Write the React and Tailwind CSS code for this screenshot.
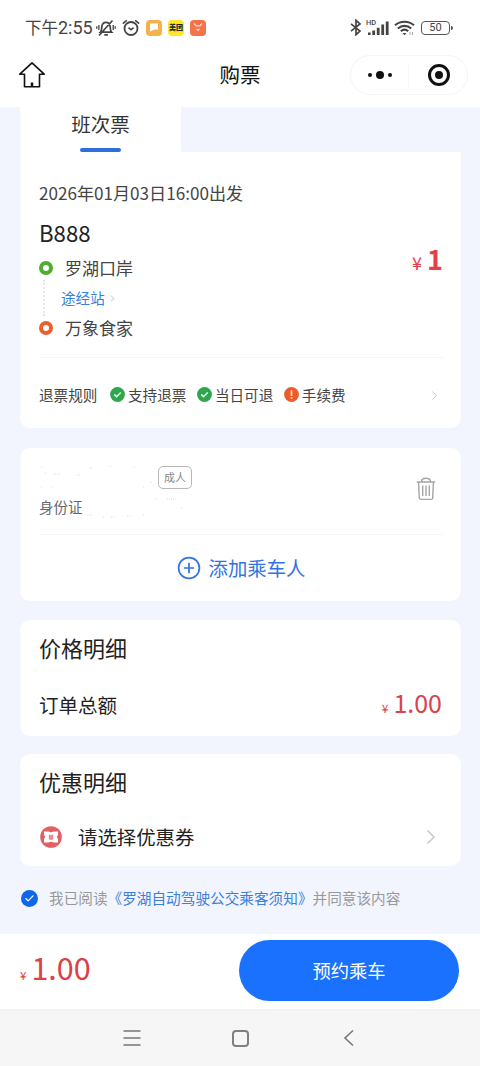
import { Check, ChevronRight } from 'lucide-react'

const Card = ({ className = '', children }) => (
  <div className={`w-[441px] bg-white rounded-[10px] px-[19px] ${className}`}>{children}</div>
)

const Ring = ({ className }) => <span className={`w-[14px] h-[14px] rounded-full border-4 bg-white ${className}`} />

const Badge = ({ ok, children }) => (
  <span className="flex items-center gap-[3px]">
    <svg width="15" height="15" viewBox="0 0 15 15" fill="none">
      <circle cx="7.5" cy="7.5" r="7.4" fill={ok ? '#30a64c' : '#ec5b2b'} />
      {ok
        ? <path d="M4.2 7.4l2.3 2.2 4.3-4.1" stroke="#d8ffe0" strokeWidth="1.5" />
        : <path d="M7.5 3.3v5.6M7.5 10.2v1.5" stroke="#ffd9a8" strokeWidth="1.7" />}
    </svg>
    {children}
  </span>
)

const StatusBar = () => (
  <div className="h-[55px] pl-[25px] pr-[27px] flex items-center justify-between text-[#444]">
    <div className="flex items-center">
      <span className="w-[69px] text-[16.5px] whitespace-nowrap">
        下午<span className="font-[Roboto] text-[18px]">2:55</span>
      </span>
      <svg className="ml-[2px]" width="20" height="18" viewBox="0 0 20 18" fill="none" stroke="#444" strokeWidth="1.7">
        <path d="M4.5 13.2c1.6-1.4.9-4 1.4-6.2C6.4 4.6 8 3.4 10 3.4s3.6 1.2 4.1 3.6c.5 2.2-.2 4.8 1.4 6.2zM8.3 15.8h3.6M3 16.5L16.5 1.5" />
        <path d="M2.9 6v5M.8 7.3v2.4M17.2 6v5M19.2 7.3v2.4" strokeWidth="1.3" />
      </svg>
      <svg className="ml-[6px]" width="18" height="17" viewBox="0 0 18 17" fill="none" stroke="#444" strokeWidth="1.8">
        <circle cx="9" cy="9.5" r="6.5" />
        <path d="M.8 4.6L4.8 1.3M17.2 4.6L13.2 1.3M6.5 8.7L9 10.8l2.6-2.1" strokeWidth="1.6" />
      </svg>
      <span className="ml-[6px] w-[16px] h-[16px] rounded-[4px] bg-[#f6b04c] flex items-center justify-center">
        <svg width="10" height="9" viewBox="0 0 10 9"><path d="M1.5.5H9v6H5.5L1 8.5V1z" fill="#fff" /></svg>
      </span>
      <span className="ml-[6px] w-[16px] h-[16px] rounded-[4px] bg-[#fce72b] text-[#222] text-[7px] leading-none font-black flex items-center justify-center whitespace-nowrap">美团</span>
      <span className="ml-[6px] w-[16px] h-[16px] rounded-[4px] bg-[#f57348] flex items-center justify-center">
        <svg width="12" height="12" viewBox="0 0 12 12" fill="none" stroke="#fff" strokeOpacity=".75" strokeWidth="1.2">
          <path d="M2 1.5l2 2.3h4l2-2.3M4.5 7l1.5 1.5L7.5 7" />
        </svg>
      </span>
    </div>
    <div className="flex items-center">
      <svg width="12" height="17" viewBox="0 0 12 17" fill="none" stroke="#444" strokeWidth="1.7">
        <path d="M1 4.8l9 7.2-4 3.7V1.3L10 5l-9 7.2" />
      </svg>
      <svg className="ml-[4px]" width="24" height="17" viewBox="0 0 24 17" fill="#444">
        <text x="0" y="6.2" fontSize="7.5" fontFamily="Roboto" fontWeight="500">HD</text>
        <path d="M2 13.5h2.6V16H2zM6.3 11.5h2.8V16H6.3zM10.8 8.8h2.8V16h-2.8zM15.3 5.5h2.8V16h-2.8zM19.8 2.5h2.8V16h-2.8z" />
      </svg>
      <svg className="ml-[4px]" width="21" height="16" viewBox="0 0 21 16" fill="none" stroke="#444" strokeWidth="2.1">
        <path d="M1 5.3C6.4.5 14.6.5 20 5.3M3.8 8.5c4-3.500 9.400-3.500 13.400 0M6.800 11.300c2.200-1.900 5.200-1.900 7.400 0" />
        <path d="M8.5 12.900h4l-2 2.300z" fill="#444" stroke="none" />
        <path d="M16 12v3M18.500 12v3" stroke="#aaa" strokeWidth="1" />
      </svg>
      <span className="ml-[6px] w-[29px] h-[14px] rounded-[4px] border border-[#555] text-[11px] leading-none font-[Roboto] flex items-center justify-center">50</span>
      <span className="ml-px w-[2px] h-[4px] rounded-r bg-[#555]" />
    </div>
  </div>
)

const NavBar = () => (
  <div className="h-[52px] pl-[18px] pr-[12px] flex items-start justify-between">
    <svg className="mt-[6px]" width="28" height="28" viewBox="0 0 28 28" fill="none" stroke="#111" strokeWidth="1.6" strokeLinejoin="round">
      <path d="M14 1.8L1.8 13.2h4.7v12.5h15V13.2h4.700z" />
      <path d="M14 21.5v4" strokeWidth="2.5" />
    </svg>
    <h1 className="ml-[84px] h-[40px] leading-[39px] text-[20.5px] text-[#111]">购票</h1>
    <div className="w-[118px] h-[40px] rounded-full border border-[#f5f5f5] flex items-center">
      <div className="w-[58px] flex items-center justify-center gap-[4px] border-r border-[#f7f7f7] h-[24px]">
        <span className="w-[4px] h-[4px] rounded-full bg-[#111]" />
        <span className="w-[8px] h-[8px] rounded-full bg-[#111]" />
        <span className="w-[4px] h-[4px] rounded-full bg-[#111]" />
      </div>
      <div className="flex-1 flex justify-center pl-[2px]">
        <span className="w-[22px] h-[22px] rounded-full border-[3px] border-[#111] flex items-center justify-center">
          <span className="w-[8px] h-[8px] rounded-full bg-[#111]" />
        </span>
      </div>
    </div>
  </div>
)

const TripCard = () => (
  <Card className="h-[276px] rounded-t-none flex flex-col">
    <p className="mt-[28px] h-[26px] leading-[26px] text-[17.1px] text-[#444]">2026年01月03日16:00出发</p>
    <div className="flex justify-between">
      <div>
        <p className="mt-[10px] h-[32px] leading-[32px] text-[22.2px] text-[#222]">B888</p>
        <div className="mt-[8px] h-[24px] flex items-center gap-[12px] text-[17px] text-[#444]">
          <Ring className="border-[#4eac2e]" /><span className="-mt-px">罗湖口岸</span>
        </div>
        <div className="ml-[4px] h-[36px] flex items-center border-l-2 border-dotted border-[#e6e6e6] pl-[16px] text-[14.6px] text-[#3b7fdc]">
          <span>途经站</span><ChevronRight size={11} className="ml-[2px] text-[#bbb]" strokeWidth={2} />
        </div>
        <div className="h-[24px] flex items-center gap-[12px] text-[17px] text-[#444]">
          <Ring className="border-[#e9602f]" /><span className="-mt-px">万象食家</span>
        </div>
      </div>
      <p className="mt-[33px] h-[40px] leading-[40px] flex items-baseline gap-[5px] text-[#e54048] mr-[-1px]">
        <span className="text-[18px]">¥</span>
        <span className="text-[27px] font-bold">1</span>
      </p>
    </div>
    <div className="mt-[17px] w-[404px] border-t border-[#f5f5f5]" />
    <div className="h-[76px] pt-[4px] flex items-center text-[14.6px] text-[#444]">
      <span className="w-[71px]">退票规则</span>
      <div className="flex gap-[10.5px]">
        <Badge ok>支持退票</Badge>
        <Badge ok>当日可退</Badge>
        <Badge>手续费</Badge>
      </div>
      <ChevronRight size={15} strokeWidth={1.5} className="ml-auto text-[#c4c4c4]" />
    </div>
  </Card>
)

const PassengerCard = () => (
  <Card className="mt-[20px] h-[153px]">
    <div className="h-[87px] w-[404px] border-b border-[#f6f6f6] flex justify-between">
      <div>
        <div className="mt-[18px] h-[24px] flex">
          <svg width="119" height="24" viewBox="0 0 119 24" fill="none" stroke="#ddd">
            <path d="M2 1h1M6 7h1M14 8h8M38 9h3M50 2h4M70 0h3M95 1h1M112 16v2M2 21h1M13 21h1M104 21h2" strokeDasharray="1 1" />
          </svg>
          <span className="w-[34px] h-[23px] rounded-[5px] border border-[#b8b8b8] text-[11px] text-[#888] flex items-center justify-center">成人</span>
        </div>
        <div className="mt-[6px] flex items-center text-[14.5px] text-[#666]">
          身份证
          <svg className="ml-[4px]" width="100" height="22" viewBox="0 0 100 22" fill="none" stroke="#ddd">
            <path d="M0 19h5M16 21h2M24 21h4M40 20h3M56 19h1M68 3h2M80 3h9M94 12h1" strokeDasharray="1 1" />
          </svg>
        </div>
      </div>
      <svg className="mt-[29px] mr-[7px]" width="20" height="24" viewBox="0 0 20 24" fill="none" stroke="#a5a5a5" strokeWidth="1.4">
        <path d="M.8 5h18.400M5.500 4.800C5.500 2.500 7 1.200 10 1.200s4.500 1.300 4.500 3.600M2.600 5.500L3.300 21c.1 1 .6 1.400 1.500 1.400h10.400c.9 0 1.400-.4 1.500-1.400l.7-15.500" />
        <path d="M6.700 8.500v10.500M10 8.500v10.500M13.300 8.500v10.500" />
      </svg>
    </div>
    <button className="w-full h-[65px] flex items-center justify-center gap-[8px] text-[19.4px] text-[#3274df] pl-[1px]">
      <svg width="24" height="24" viewBox="0 0 24 24" fill="none" stroke="#3274df" strokeWidth="1.7">
        <circle cx="12" cy="12" r="10.4" />
        <path d="M12 6.800v10.400M6.800 12h10.400" />
      </svg>
      添加乘车人
    </button>
  </Card>
)

export default function App() {
  return (
    <div className="w-[480px] h-[1066px] overflow-hidden flex flex-col bg-[#f2f5fe] font-['Noto_Sans_CJK_SC',sans-serif]">
      <div className="h-[107px] shrink-0 bg-white">
        <StatusBar />
        <NavBar />
      </div>

      <main className="h-[827px] shrink-0 pl-[20px]">
        <div className="w-[161px] h-[45px] bg-white flex flex-col items-center">
          <span className="h-[41px] leading-[34px] text-[19.5px] text-[#333]">班次票</span>
          <span className="w-[41px] h-[4px] rounded-full bg-[#2c70dc]" />
        </div>
        <TripCard />
        <PassengerCard />

        <Card className="mt-[19px] h-[116px]">
          <h2 className="pt-[9px] h-[56px] leading-[36px] text-[22px] text-[#222]">价格明细</h2>
          <div className="flex items-center justify-between h-[58px]">
            <span className="text-[19.5px] text-[#222]">订单总额</span>
            <span className="-mt-[6px] flex items-baseline gap-[5px] text-[#d8434b] leading-none">
              <span className="text-[12px]">¥</span>
              <span className="text-[25px]">1.00</span>
            </span>
          </div>
        </Card>

        <Card className="mt-[18px] h-[112px]">
          <h2 className="pt-[9px] h-[56px] leading-[36px] text-[22px] text-[#222]">优惠明细</h2>
          <div className="flex items-center h-[54px]">
            <svg className="ml-[1px]" width="22" height="22" viewBox="0 0 22 22">
              <circle cx="11" cy="11" r="10.8" fill="#e45f62" />
              <path d="M4 5.500h4.500q2.500 1.400 5 0H18v3.800q-2.200 1.700 0 3.400v3.800h-4.500q-2.500-1.400-5 0H4v-3.800q2.200-1.700 0-3.400z" fill="#fff" />
              <path d="M8.800 8.300l2.200 1 2.200-1v5l-2.200.8-2.200-.8z" fill="#ee8a8c" />
            </svg>
            <span className="ml-[16px] text-[19.4px] text-[#222]">请选择优惠券</span>
            <svg className="ml-auto mr-[6px]" width="10" height="16" viewBox="0 0 10 16" fill="none" stroke="#c8c8c8" strokeWidth="1.5">
              <path d="M1.500 1.500L8 8l-6.500 6.500" />
            </svg>
          </div>
        </Card>

        <div className="mt-[20px] h-[24px] flex items-center text-[14.65px] text-[#999] whitespace-nowrap">
          <span className="ml-[1px] mr-[11px] w-[17px] h-[17px] rounded-full bg-[#0e67e8] flex items-center justify-center">
            <Check size={11} strokeWidth={2.5} className="text-white" />
          </span>
          我已阅读<span className="text-[#3b7fdc]">《罗湖自动驾驶公交乘客须知》</span>并同意该内容
        </div>
      </main>

      <footer className="h-[75px] shrink-0 bg-white pl-[20px] pr-[21px] flex items-center justify-between">
        <span className="-mt-[8px] flex items-baseline gap-[5px] text-[#dc4144] leading-none">
          <span className="text-[11.5px]">¥</span>
          <span className="text-[30.5px]">1.00</span>
        </span>
        <button className="-mt-[2px] w-[220px] h-[61px] rounded-full bg-[#1a71fd] text-white text-[18.3px]">预约乘车</button>
      </footer>

      <div className="h-[57px] shrink-0 bg-[#f6f6f6] border-t border-[#f1f1f1] flex items-center justify-center gap-[91px]">
        <svg width="18" height="18" viewBox="0 0 18 18" fill="none" stroke="#777" strokeWidth="1.6">
          <path d="M.5 2h17M.5 9h17M.5 16h17" />
        </svg>
        <span className="w-[17px] h-[17px] rounded-[4px] border-2 border-[#808080]" />
        <svg width="18" height="18" viewBox="0 0 18 18" fill="none" stroke="#777" strokeWidth="1.6">
          <path d="M13 1.500L5 9l8 7.500" />
        </svg>
      </div>
    </div>
  )
}
